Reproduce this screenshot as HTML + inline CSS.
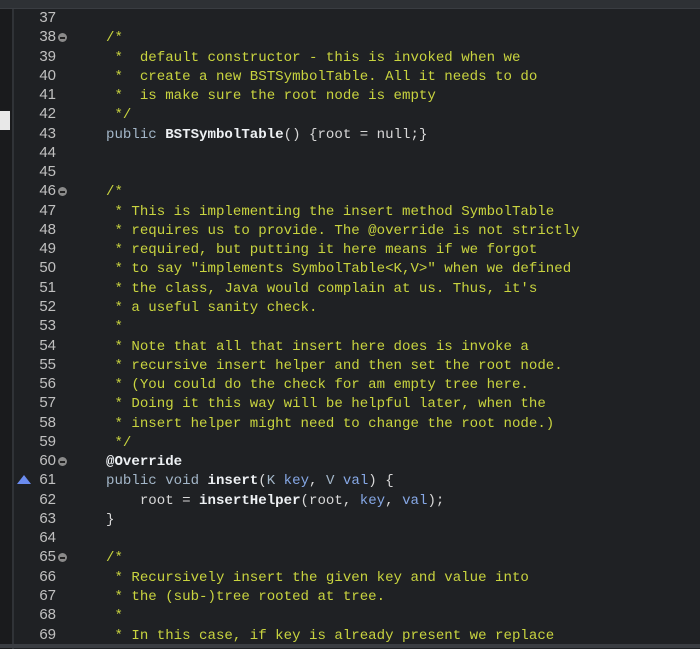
<!DOCTYPE html>
<html><head><style>
body{margin:0;width:700px;height:648px;background:#1f2124;overflow:hidden;position:relative;font-family:"Liberation Mono",monospace;}
.top{position:absolute;left:0;top:0;width:700px;height:8px;background:#2e3135;border-bottom:1px solid #3a3d42}
.left{position:absolute;left:0;top:9px;width:12px;height:640px;background:#1a1b1d;border-right:2px solid #303337}
.mark{position:absolute;left:0;top:111px;width:10px;height:19px;background:#e8e8e8}
.bot{position:absolute;left:0;top:644px;width:700px;height:4px;background:#3a3d42}
.code{position:absolute;left:0;top:9px;width:700px;font-size:14.1px;line-height:19.28px;color:#d8d8d8}
.ln{position:absolute;left:28px;top:-1px;width:28px;text-align:right;color:#c0c0c0;font-family:"Liberation Sans",sans-serif;font-size:15px}
.row{height:19.28px;position:relative}
.t{position:absolute;left:106px;white-space:pre;top:1px}
.c{color:#c9d43f}
.k{color:#a3b6c8}
.b{color:#eef1f4;font-weight:bold}
.v{color:#86a8e6}
.f{position:absolute;left:58px;top:5px;width:9px;height:9px;border-radius:50%;background:#8a8a8a}
.f:after{content:"";position:absolute;left:2px;top:4px;width:5px;height:1.5px;background:#222}
.tri{position:absolute;left:17px;top:4px;width:0;height:0;border-left:7px solid transparent;border-right:7px solid transparent;border-bottom:9px solid #6b8cf0}
</style></head><body>
<div class="top"></div><div class="left"></div><div class="mark"></div>
<div class="code"><div class="row"><span class="ln">37</span></div><div class="row"><span class="ln">38</span><span class="f"></span><span class="t c">/*</span></div><div class="row"><span class="ln">39</span><span class="t c"> *  default constructor - this is invoked when we</span></div><div class="row"><span class="ln">40</span><span class="t c"> *  create a new BSTSymbolTable. All it needs to do</span></div><div class="row"><span class="ln">41</span><span class="t c"> *  is make sure the root node is empty</span></div><div class="row"><span class="ln">42</span><span class="t c"> */</span></div><div class="row"><span class="ln">43</span><span class="t"><span class="k">public</span> <span class="b">BSTSymbolTable</span>() {root = null;}</span></div><div class="row"><span class="ln">44</span></div><div class="row"><span class="ln">45</span></div><div class="row"><span class="ln">46</span><span class="f"></span><span class="t c">/*</span></div><div class="row"><span class="ln">47</span><span class="t c"> * This is implementing the insert method SymbolTable</span></div><div class="row"><span class="ln">48</span><span class="t c"> * requires us to provide. The @override is not strictly</span></div><div class="row"><span class="ln">49</span><span class="t c"> * required, but putting it here means if we forgot</span></div><div class="row"><span class="ln">50</span><span class="t c"> * to say "implements SymbolTable&lt;K,V&gt;" when we defined</span></div><div class="row"><span class="ln">51</span><span class="t c"> * the class, Java would complain at us. Thus, it's</span></div><div class="row"><span class="ln">52</span><span class="t c"> * a useful sanity check.</span></div><div class="row"><span class="ln">53</span><span class="t c"> *</span></div><div class="row"><span class="ln">54</span><span class="t c"> * Note that all that insert here does is invoke a</span></div><div class="row"><span class="ln">55</span><span class="t c"> * recursive insert helper and then set the root node.</span></div><div class="row"><span class="ln">56</span><span class="t c"> * (You could do the check for am empty tree here.</span></div><div class="row"><span class="ln">57</span><span class="t c"> * Doing it this way will be helpful later, when the</span></div><div class="row"><span class="ln">58</span><span class="t c"> * insert helper might need to change the root node.)</span></div><div class="row"><span class="ln">59</span><span class="t c"> */</span></div><div class="row"><span class="ln">60</span><span class="f"></span><span class="t b">@Override</span></div><div class="row"><span class="tri"></span><span class="ln">61</span><span class="t"><span class="k">public void</span> <span class="b">insert</span>(<span class="k">K</span> <span class="v">key</span>, <span class="k">V</span> <span class="v">val</span>) {</span></div><div class="row"><span class="ln">62</span><span class="t">    root = <span class="b">insertHelper</span>(root, <span class="v">key</span>, <span class="v">val</span>);</span></div><div class="row"><span class="ln">63</span><span class="t">}</span></div><div class="row"><span class="ln">64</span></div><div class="row"><span class="ln">65</span><span class="f"></span><span class="t c">/*</span></div><div class="row"><span class="ln">66</span><span class="t c"> * Recursively insert the given key and value into</span></div><div class="row"><span class="ln">67</span><span class="t c"> * the (sub-)tree rooted at tree.</span></div><div class="row"><span class="ln">68</span><span class="t c"> *</span></div><div class="row"><span class="ln">69</span><span class="t c"> * In this case, if key is already present we replace</span></div></div>
<div class="bot"></div>
</body></html>
